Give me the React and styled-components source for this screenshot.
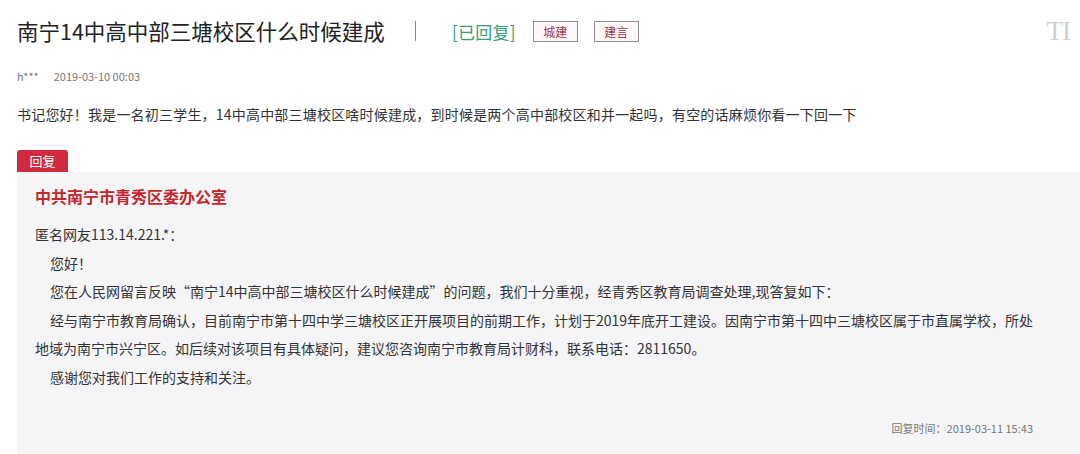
import styled, { createGlobalStyle } from 'styled-components';

const GlobalStyle = createGlobalStyle`
  html, body {
    margin: 0;
    padding: 0;
    background: #fff;
  }
  body {
    font-family: "Noto Sans CJK SC", "Noto Sans", sans-serif;
    color: #333;
  }
`;

const replyParas = [
  '您好！',
  '您在人民网留言反映“南宁14中高中部三塘校区什么时候建成”的问题，我们十分重视，经青秀区教育局调查处理,现答复如下：',
  '经与南宁市教育局确认，目前南宁市第十四中学三塘校区正开展项目的前期工作，计划于2019年底开工建设。因南宁市第十四中三塘校区属于市直属学校，所处地域为南宁市兴宁区。如后续对该项目有具体疑问，建议您咨询南宁市教育局计财科，联系电话：2811650。',
  '感谢您对我们工作的支持和关注。',
];

function App() {
  return (
    <>
      <GlobalStyle />
      <Page>
        <Header>
          <Title>南宁14中高中部三塘校区什么时候建成</Title>
          <Divider />
          <Status>[已回复]</Status>
          <Tags>
            <Tag>城建</Tag>
            <Tag>建言</Tag>
          </Tags>
          <Mark>TI</Mark>
        </Header>

        <Meta>
          <span>h***</span>
          <span>2019-03-10 00:03</span>
        </Meta>

        <Question>
          书记您好！我是一名初三学生，14中高中部三塘校区啥时候建成，到时候是两个高中部校区和并一起吗，有空的话麻烦你看一下回一下
        </Question>

        <ReplyTab>回复</ReplyTab>
        <ReplyBox>
          <Office>中共南宁市青秀区委办公室</Office>
          <Body>
            <p>匿名网友113.14.221.*：</p>
            {replyParas.map((t) => (
              <Para key={t.slice(0, 8)}>{t}</Para>
            ))}
          </Body>
          <ReplyTime>回复时间：2019-03-11 15:43</ReplyTime>
        </ReplyBox>
      </Page>
    </>
  );
}

const Page = styled.div`
  width: 1080px;
  height: 454px;
  overflow: hidden;
  padding-left: 17px;
  box-sizing: border-box;
  display: flex;
  flex-direction: column;
`;

const Header = styled.div`
  display: flex;
  align-items: center;
  height: 62px;
  padding-right: 10px;
`;

const Title = styled.h1`
  margin: 0;
  font-size: 21.5px;
  font-weight: 400;
  color: #222;
  line-height: 30px;
`;

const Divider = styled.span`
  width: 1px;
  height: 20px;
  background: #888;
  margin-left: 30px;
`;

const Status = styled.span`
  margin-left: 36px;
  color: #3b9b72;
  font-size: 17px;
  letter-spacing: 0.3px;
`;

const Tags = styled.div`
  display: flex;
  gap: 16px;
  margin-left: 17px;
`;

const Tag = styled.span`
  width: 45px;
  height: 21px;
  box-sizing: border-box;
  border: 1px solid #8f8f8f;
  background: #fff6f8;
  color: #9b3548;
  font-size: 12px;
  line-height: 19px;
  text-align: center;
`;

const Mark = styled.span`
  margin-left: auto;
  font-family: "Liberation Serif", serif;
  font-size: 27px;
  color: #cfcfcf;
  letter-spacing: -1px;
`;

const Meta = styled.div`
  display: flex;
  gap: 15px;
  margin-top: 4px;
  font-size: 11px;
  line-height: 20px;
  color: #777;
`;

const Question = styled.p`
  margin: 18px 0 0;
  font-size: 14px;
  line-height: 20px;
  letter-spacing: 0.2px;
  color: #333;
`;

const ReplyTab = styled.span`
  align-self: flex-start;
  margin-top: 26px;
  width: 51px;
  height: 22px;
  background: #d02a3e;
  border-radius: 3px 3px 0 0;
  color: #fff;
  font-size: 13px;
  line-height: 21px;
  text-align: center;
`;

const ReplyBox = styled.div`
  flex: 1;
  background: #f5f5f7;
  padding: 12px 35px 0 18px;
`;

const Office = styled.h2`
  margin: 0;
  font-size: 16px;
  font-weight: 700;
  line-height: 24px;
  color: #c0282e;
`;

const Body = styled.div`
  margin-top: 12px;
  font-size: 14px;
  line-height: 28.5px;
  color: #333;

  p {
    margin: 0;
  }
`;

const Para = styled.p`
  text-indent: 15px;
`;

const ReplyTime = styled.div`
  margin-top: 27px;
  padding-right: 12px;
  text-align: right;
  font-size: 11px;
  line-height: 20px;
  color: #777;
`;

export default App;
